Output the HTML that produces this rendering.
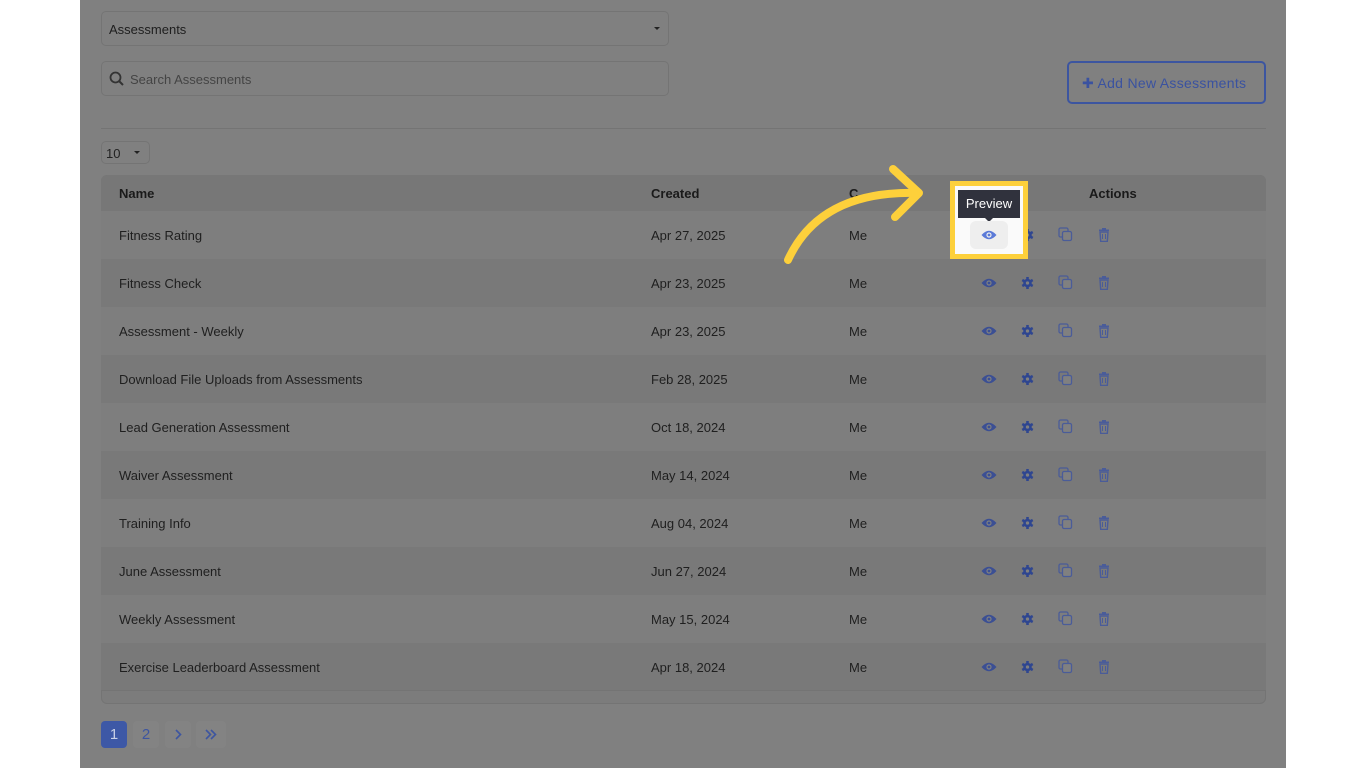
<!DOCTYPE html>
<html><head><meta charset="utf-8"><style>
*{box-sizing:border-box;margin:0;padding:0}
body{width:1366px;height:768px;background:#fff;font-family:"Liberation Sans",sans-serif;position:relative;overflow:hidden}
.main{position:absolute;left:80px;top:0;width:1206px;height:768px;background:#808080}
.abs{position:absolute}
.box{border:1px solid #747474;border-radius:5px;background:#808080}
.txt{font-size:13px;color:#1e1e1e}
.row{position:absolute;left:101px;width:1165px;height:48px;font-size:13px;color:#1f1f1f}
.row span{position:absolute;top:17px}
.ic{position:absolute;top:17px}
</style></head><body>
<div class="main"></div>
<div class="abs box" style="left:101px;top:11px;width:568px;height:35px"></div>
<div class="abs txt" style="left:109px;top:22px;font-size:13px">Assessments</div>
<div class="abs" style="left:654px;top:27px;border-left:3px solid transparent;border-right:3px solid transparent;border-top:3px solid #222"></div>
<div class="abs box" style="left:101px;top:61px;width:568px;height:35px"></div>
<svg class="abs" style="left:109px;top:71px" width="16" height="16" viewBox="0 0 16 16"><circle cx="6.5" cy="6.5" r="5" fill="none" stroke="#333" stroke-width="1.8"/><path d="M10 10l4 4" stroke="#333" stroke-width="2"/></svg>
<div class="abs" style="left:130px;top:72px;font-size:13px;color:#444">Search Assessments</div>
<div class="abs" style="left:1067px;top:61px;width:199px;height:43px;border:2px solid #3c55a0;border-radius:5px"></div>
<div class="abs" style="left:1082px;top:75px;font-size:14px;color:#3a52a0;letter-spacing:.3px">✚ Add New Assessments</div>
<div class="abs" style="left:101px;top:128px;width:1165px;height:1px;background:#747474"></div>
<div class="abs box" style="left:101px;top:141px;width:49px;height:23px"></div>
<div class="abs" style="left:106px;top:146px;font-size:13px;color:#222">10</div>
<div class="abs" style="left:134px;top:151px;border-left:3px solid transparent;border-right:3px solid transparent;border-top:3px solid #222"></div>
<div class="abs" style="left:101px;top:175px;width:1165px;height:529px;border:1px solid #747474;border-radius:6px;background:#7c7c7c"></div>
<div class="abs" style="left:101px;top:175px;width:1165px;height:36px;background:#777;border-radius:6px 6px 0 0"></div>
<div class="abs" style="left:119px;top:186px;font-size:13px;font-weight:bold;color:#1a1a1a">Name</div>
<div class="abs" style="left:651px;top:186px;font-size:13px;font-weight:bold;color:#1a1a1a">Created</div>
<div class="abs" style="left:849px;top:186px;font-size:13px;font-weight:bold;color:#1a1a1a">C</div>
<div class="abs" style="left:1089px;top:186px;font-size:13px;font-weight:bold;color:#1a1a1a">Actions</div>
<div id="rows"></div>
<script>
var d=[["Fitness Rating","Apr 27, 2025"],["Fitness Check","Apr 23, 2025"],["Assessment - Weekly","Apr 23, 2025"],["Download File Uploads from Assessments","Feb 28, 2025"],["Lead Generation Assessment","Oct 18, 2024"],["Waiver Assessment","May 14, 2024"],["Training Info","Aug 04, 2024"],["June Assessment","Jun 27, 2024"],["Weekly Assessment","May 15, 2024"],["Exercise Leaderboard Assessment","Apr 18, 2024"]];
var h="";
var eye='<svg class="ic" style="left:880px;top:18px" width="16" height="12" viewBox="0 0 16 12"><path d="M0.5 6Q8 -2.5 15.5 6Q8 14.5 0.5 6Z" fill="#3b4f94"/><circle cx="8" cy="6" r="2.6" fill="#808080"/><circle cx="8" cy="6" r="1.4" fill="#3b4f94"/></svg>';
var gear='<svg class="ic" style="left:920px" width="13" height="14" viewBox="0 0 14 14"><g fill="#2f4690"><circle cx="7" cy="7" r="4.6"/><rect x="5.6" y="0.5" width="2.8" height="13"/><rect x="5.6" y="0.5" width="2.8" height="13" transform="rotate(60 7 7)"/><rect x="5.6" y="0.5" width="2.8" height="13" transform="rotate(120 7 7)"/></g><circle cx="7" cy="7" r="1.8" fill="#808080"/></svg>';
var copy='<svg class="ic" style="left:957px;top:16px" width="15" height="15" viewBox="0 0 15 15"><rect x="1" y="1" width="9" height="9" rx="1.5" fill="none" stroke="#4a5c99" stroke-width="1.3"/><rect x="4.5" y="4.5" width="9" height="9" rx="1.5" fill="#808080" stroke="#4a5c99" stroke-width="1.3"/></svg>';
var trash='<svg class="ic" style="left:997px" width="12" height="14" viewBox="0 0 12 14"><rect x="1" y="1.5" width="10" height="1.6" fill="#4a5c99"/><rect x="4" y="0" width="4" height="2" fill="#4a5c99"/><path d="M2 4h8l-.7 9.5h-6.6z" fill="none" stroke="#4a5c99" stroke-width="1.4"/><path d="M4.5 6v5M7.5 6v5" stroke="#4a5c99"/></svg>';
d.forEach(function(r,i){var y=211+i*48;h+='<div class="row" style="top:'+y+'px;background:'+(i%2?'#797979':'#7e7e7e')+'"><span style="left:18px">'+r[0]+'</span><span style="left:550px">'+r[1]+'</span><span style="left:748px">Me</span>'+eye+gear+copy+trash+'</div>';});
document.getElementById('rows').innerHTML=h;
</script>
<div class="abs" style="left:101px;top:690px;width:1165px;height:1px;background:#747474"></div>
<div class="abs" style="left:101px;top:721px;width:26px;height:27px;background:#3d58a6;border-radius:4px;color:#c8d0e6;font-size:15px;text-align:center;line-height:27px">1</div>
<div class="abs" style="left:133px;top:721px;width:26px;height:27px;background:#838383;border-radius:4px;color:#3d55a0;font-size:15px;text-align:center;line-height:27px">2</div>
<svg class="abs" style="left:165px;top:721px" width="26" height="27"><rect width="26" height="27" rx="4" fill="#838383"/><path d="M11 9l4.5 4.5L11 18" fill="none" stroke="#3d55a0" stroke-width="1.6"/></svg>
<svg class="abs" style="left:196px;top:721px" width="30" height="27"><rect width="30" height="27" rx="4" fill="#838383"/><path d="M10 9l4.5 4.5L10 18M15 9l4.5 4.5L15 18" fill="none" stroke="#3d55a0" stroke-width="1.6"/></svg>
<!-- highlight -->
<div class="abs" style="left:950px;top:181px;width:78px;height:78px;border:5px solid #fdd03b;background:#fafafa"></div>
<div class="abs" style="left:958px;top:190px;width:62px;height:28px;background:#30323d;color:#fff;font-size:13px;text-align:center;line-height:28px">Preview</div>
<div class="abs" style="left:984px;top:217px;border-left:5px solid transparent;border-right:5px solid transparent;border-top:5px solid #30323d"></div>
<div class="abs" style="left:970px;top:221px;width:38px;height:28px;background:#eee;border-radius:6px"></div>
<svg class="abs" style="left:981px;top:229px" width="16" height="12" viewBox="0 0 16 12"><path d="M0.5 6Q8 -2.5 15.5 6Q8 14.5 0.5 6Z" fill="#5b7ad8"/><circle cx="8" cy="6" r="2.6" fill="#eee"/><circle cx="8" cy="6" r="1.4" fill="#5b7ad8"/></svg>
<svg class="abs" style="left:0;top:0" width="1366" height="768"><g fill="none" stroke="#fdd03b" stroke-width="8" stroke-linecap="round" stroke-linejoin="round"><path d="M788 260Q820 190 918 193"/><path d="M893 169L919 193L895 217"/></g></svg>
</body></html>
